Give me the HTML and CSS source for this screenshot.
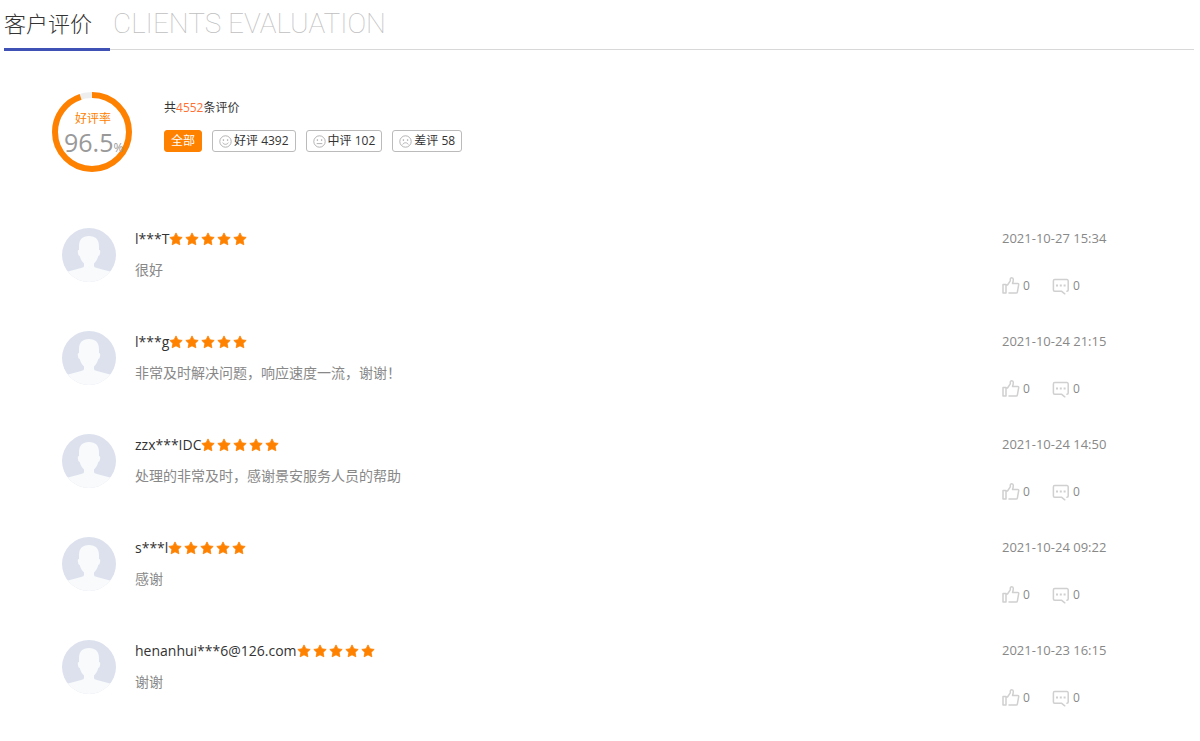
FILE: index.html
```html
<!DOCTYPE html>
<html lang="zh-CN">
<head>
<meta charset="utf-8">
<title>客户评价</title>
<link rel="stylesheet" href="styles.css">
</head>
<body>
<svg class="sprite" aria-hidden="true">
  <symbol id="avatar" viewBox="0 0 54 54">
    <clipPath id="round"><circle cx="27" cy="27" r="27"/></clipPath>
    <g clip-path="url(#round)">
      <rect width="54" height="54" fill="#dce1ed"/>
      <path d="M27 8C33.500 8 37 11.500 37 18V22C38.300 22 38.500 23 38 25.200C37.700 27 37.200 28 36.300 28C35.500 31 34 33.500 32 35.500V37.500C32 39 33 39.500 35 40L48 43.500V54H6V43.500L19 40C21 39.500 22 39 22 37.500V35.500C20 33.500 18.500 31 17.700 28C16.800 28 16.300 27 16 25.200C15.500 23 15.700 22 17 22V18C17 11.500 20.500 8 27 8Z" fill="#f8fafc"/>
    </g>
  </symbol>
  <symbol id="star" viewBox="0 0 14 14">
    <path d="M7 .9l1.900 3.900 4.300.6-3.100 3 .8 4.400L7 10.800l-3.900 2 .8-4.400-3.100-3 4.300-.6z" fill="#ff8100" stroke="#ff8100" stroke-width=".8" stroke-linejoin="round"/>
  </symbol>
  <symbol id="stars" viewBox="0 0 80 14">
    <use href="#star" x="0" width="14" height="14"/>
    <use href="#star" x="16" width="14" height="14"/>
    <use href="#star" x="32" width="14" height="14"/>
    <use href="#star" x="48" width="14" height="14"/>
    <use href="#star" x="64" width="14" height="14"/>
  </symbol>
  <symbol id="like" viewBox="0 0 18 18">
    <g fill="none" stroke="#d0d0d0" stroke-width="1.500" stroke-linejoin="round" stroke-linecap="round">
      <path d="M1 7.500h3v8.500H1zM4 8h1.500L8.300 3.800V2.200c0-2 3-1.900 3 .4 0 1.500-.3 2.600-.8 3.900h5.300c.8 0 1 .6.900 1.200l-1.300 7.100c-.1.700-.6 1.200-1.300 1.200H7"/>
    </g>
  </symbol>
  <symbol id="comment" viewBox="0 0 18 18">
    <path d="M15 14.300h-.1c.8 0 1.300-.5 1.300-1.200V3.900c0-.8-.5-1.300-1.300-1.300H2.700c-.8 0-1.300.5-1.300 1.300v9.200c0 .7.500 1.200 1.300 1.200h7l3.100 2.500" fill="none" stroke="#d0d0d0" stroke-width="1.500" stroke-linecap="round" stroke-linejoin="round"/>
    <path d="M4 7.500h2v2H4zM7.800 7.500h2v2h-2zM11.600 7.500h2v2h-2z" fill="#d0d0d0"/>
  </symbol>
  <symbol id="face" viewBox="0 0 13 13">
    <circle cx="6.500" cy="6.500" r="5.700" fill="none" stroke="#aaa" stroke-width=".9"/>
    <circle cx="4.400" cy="5.100" r=".8" fill="#aaa"/>
    <circle cx="8.600" cy="5.100" r=".8" fill="#aaa"/>
  </symbol>
</svg>

<section class="reviews">
  <header class="heading">
    <h2 class="heading-title">客户评价</h2>
    <span class="heading-sub">CLIENTS EVALUATION</span>
  </header>

  <div class="summary">
    <div class="score">
      <svg class="score-ring" viewBox="0 0 80 80" aria-hidden="true">
        <circle cx="40" cy="40" r="37" fill="none" stroke="#eee" stroke-width="6"/>
        <circle cx="40" cy="40" r="37" fill="none" stroke="#ff8100" stroke-width="6" pathLength="100" stroke-dasharray="95 5" transform="rotate(-90 40 40)"/>
      </svg>
      <div class="score-text">
        <span class="score-label">好评率</span>
        <span class="score-value">96.5<small class="score-unit">%</small></span>
      </div>
    </div>
    <div class="summary-body">
      <p class="total">共<span class="total-count">4552</span>条评价</p>
      <div class="filters">
        <button class="filter filter-active" type="button">全部</button>
        <button class="filter" type="button"><svg class="face" viewBox="0 0 13 13" aria-hidden="true"><use href="#face"/><path d="M3.700 7.600c1 2.300 4.600 2.300 5.600 0" fill="none" stroke="#aaa" stroke-width=".9"/></svg>好评 4392</button>
        <button class="filter" type="button"><svg class="face" viewBox="0 0 13 13" aria-hidden="true"><use href="#face"/><path d="M3.700 8.600h5.600" stroke="#aaa" stroke-width=".9"/></svg>中评 102</button>
        <button class="filter" type="button"><svg class="face" viewBox="0 0 13 13" aria-hidden="true"><use href="#face"/><path d="M3.700 9.500c1-2.300 4.600-2.300 5.600 0" fill="none" stroke="#aaa" stroke-width=".9"/></svg>差评 58</button>
      </div>
    </div>
  </div>

  <ul class="list">
    <li class="review">
      <svg class="avatar" aria-hidden="true"><use href="#avatar"/></svg>
      <div class="review-body">
        <div class="author">l***T<svg class="stars" role="img" aria-label="5"><use href="#stars"/></svg></div>
        <p class="comment">很好</p>
      </div>
      <div class="meta">
        <time class="date">2021-10-27 15:34</time>
        <div class="actions">
          <button class="action" type="button"><svg class="action-icon" aria-hidden="true"><use href="#like"/></svg>0</button>
          <button class="action" type="button"><svg class="action-icon" aria-hidden="true"><use href="#comment"/></svg>0</button>
        </div>
      </div>
    </li>
    <li class="review">
      <svg class="avatar" aria-hidden="true"><use href="#avatar"/></svg>
      <div class="review-body">
        <div class="author">l***g<svg class="stars" role="img" aria-label="5"><use href="#stars"/></svg></div>
        <p class="comment">非常及时解决问题，响应速度一流，谢谢！</p>
      </div>
      <div class="meta">
        <time class="date">2021-10-24 21:15</time>
        <div class="actions">
          <button class="action" type="button"><svg class="action-icon" aria-hidden="true"><use href="#like"/></svg>0</button>
          <button class="action" type="button"><svg class="action-icon" aria-hidden="true"><use href="#comment"/></svg>0</button>
        </div>
      </div>
    </li>
    <li class="review">
      <svg class="avatar" aria-hidden="true"><use href="#avatar"/></svg>
      <div class="review-body">
        <div class="author">zzx***IDC<svg class="stars" role="img" aria-label="5"><use href="#stars"/></svg></div>
        <p class="comment">处理的非常及时，感谢景安服务人员的帮助</p>
      </div>
      <div class="meta">
        <time class="date">2021-10-24 14:50</time>
        <div class="actions">
          <button class="action" type="button"><svg class="action-icon" aria-hidden="true"><use href="#like"/></svg>0</button>
          <button class="action" type="button"><svg class="action-icon" aria-hidden="true"><use href="#comment"/></svg>0</button>
        </div>
      </div>
    </li>
    <li class="review">
      <svg class="avatar" aria-hidden="true"><use href="#avatar"/></svg>
      <div class="review-body">
        <div class="author">s***l<svg class="stars" role="img" aria-label="5"><use href="#stars"/></svg></div>
        <p class="comment">感谢</p>
      </div>
      <div class="meta">
        <time class="date">2021-10-24 09:22</time>
        <div class="actions">
          <button class="action" type="button"><svg class="action-icon" aria-hidden="true"><use href="#like"/></svg>0</button>
          <button class="action" type="button"><svg class="action-icon" aria-hidden="true"><use href="#comment"/></svg>0</button>
        </div>
      </div>
    </li>
    <li class="review">
      <svg class="avatar" aria-hidden="true"><use href="#avatar"/></svg>
      <div class="review-body">
        <div class="author">henanhui***6@126.com<svg class="stars" role="img" aria-label="5"><use href="#stars"/></svg></div>
        <p class="comment">谢谢</p>
      </div>
      <div class="meta">
        <time class="date">2021-10-23 16:15</time>
        <div class="actions">
          <button class="action" type="button"><svg class="action-icon" aria-hidden="true"><use href="#like"/></svg>0</button>
          <button class="action" type="button"><svg class="action-icon" aria-hidden="true"><use href="#comment"/></svg>0</button>
        </div>
      </div>
    </li>
  </ul>
</section>
</body>
</html>
```
FILE: styles.css
```css
* {
  box-sizing: border-box;
}

body {
  margin: 0;
  background: #fff;
  color: #333;
  font-family: "Open Sans", "Noto Sans CJK SC", sans-serif;
  font-size: 14px;
}

button {
  font: inherit;
  color: inherit;
  margin: 0;
  cursor: pointer;
}

p {
  margin: 0;
}

.sprite {
  position: absolute;
  width: 0;
  height: 0;
}

.reviews {
  padding: 0 6px 0 4px;
}

.heading {
  display: flex;
  height: 50px;
  border-bottom: 1px solid #d8d8d8;
}

.heading-title {
  margin: 0;
  width: 106px;
  height: 51px;
  border-bottom: 3px solid #3f51b5;
  font-size: 22px;
  font-weight: 300;
  line-height: 46px;
}

.heading-sub {
  padding-left: 3px;
  color: #c0c0c0;
  font-family: Roboto, "Liberation Sans", sans-serif;
  font-size: 28px;
  font-weight: 100;
  line-height: 48px;
}

.summary {
  display: flex;
  gap: 32px;
  padding: 42px 48px 0;
}

.score {
  display: grid;
  width: 80px;
  height: 80px;
}

.score-ring,
.score-text {
  grid-area: 1 / 1;
}

.score-ring {
  width: 80px;
  height: 80px;
}

.score-text {
  display: flex;
  flex-direction: column;
  padding: 18px 0 0 12px;
  white-space: nowrap;
}

.score-label {
  padding-left: 11px;
  color: #ff8100;
  font-size: 12px;
  line-height: 18px;
}

.score-value {
  color: #999;
  font-size: 25px;
  line-height: 28px;
}

.score-unit {
  font-size: 12px;
}

.total {
  padding-top: 6px;
  font-size: 12px;
  line-height: 20px;
}

.total-count {
  color: #ff7033;
}

.filters {
  display: flex;
  gap: 10px;
  padding-top: 12px;
}

.filter {
  display: flex;
  align-items: center;
  gap: 2px;
  height: 22px;
  padding: 0 6px;
  border: 1px solid #bbb;
  border-radius: 3px;
  background: #fff;
  font-size: 12px;
  line-height: 20px;
}

.filter-active {
  border-color: #ff8100;
  background: #ff8100;
  color: #fff;
}

.face {
  width: 13px;
  height: 13px;
}

.list {
  display: grid;
  gap: 34px;
  margin: 0;
  padding: 56px 88px 0 58px;
  list-style: none;
}

.review {
  display: flex;
  min-height: 69px;
}

.avatar {
  width: 54px;
  height: 54px;
  flex: none;
}

.review-body {
  flex: 1;
  padding-left: 19px;
}

.author {
  display: flex;
  align-items: center;
  line-height: 22px;
}

.stars {
  width: 80px;
  height: 14px;
}

.comment {
  padding-top: 9px;
  color: #888;
  line-height: 22px;
}

.meta {
  width: 104px;
  color: #888;
  font-size: 12px;
  white-space: nowrap;
}

.date {
  display: block;
  font-size: 13px;
  line-height: 20px;
}

.actions {
  display: flex;
  gap: 22px;
  padding-top: 28px;
}

.action {
  display: flex;
  align-items: center;
  gap: 3px;
  padding: 0;
  border: 0;
  background: none;
  line-height: 20px;
}

.action-icon {
  width: 18px;
  height: 18px;
}
```
